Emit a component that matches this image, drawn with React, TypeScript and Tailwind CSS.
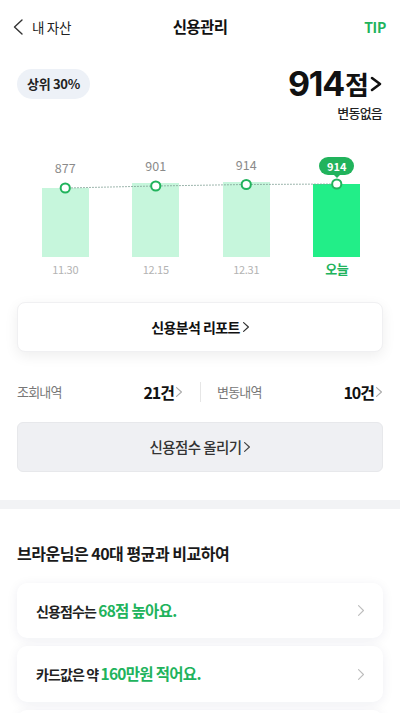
import React from "react";

const GREEN = "#21b35c";

function Chevron({ w = 6, h = 10, color = "#9a9a9a", sw = 1.3, className = "" }: { w?: number; h?: number; color?: string; sw?: number; className?: string }) {
  return (
    <svg width={w} height={h} viewBox={`0 0 ${w} ${h}`} className={className} fill="none">
      <polyline points={`${sw / 2},${sw / 2} ${w - sw / 2},${h / 2} ${sw / 2},${h - sw / 2}`} stroke={color} strokeWidth={sw} strokeLinecap="round" strokeLinejoin="round" />
    </svg>
  );
}

const cols = [
  { v: "877", d: "11.30", h: 69, gap: 12 },
  { v: "901", d: "12.15", h: 74, gap: 9 },
  { v: "914", d: "12.31", h: 75, gap: 9 },
  { v: "914", d: "오늘", h: 73, gap: 9, today: true },
];

const pts = [
  [65.25, 38],
  [155.75, 36],
  [246.25, 34.5],
  [336.75, 34],
];

export default function App() {
  return (
    <div
      className="w-[400px] h-[713px] overflow-hidden bg-white text-[#111]"
      style={{ fontFamily: '"Noto Sans CJK KR", "Noto Sans", sans-serif' }}
    >
      {/* Header */}
      <div className="h-[54px] grid grid-cols-3 items-center">
        <div className="flex items-center pl-[13px] gap-[9px]">
          <svg width="10" height="16" viewBox="0 0 10 16" fill="none">
            <polyline points="9,1 1.5,8 9,15" stroke="#333" strokeWidth="1.4" strokeLinejoin="round" strokeLinecap="round" />
          </svg>
          <span className="text-[13.5px] text-[#222] tracking-[-0.3px]">내 자산</span>
        </div>
        <div className="text-center text-[15.5px] font-bold tracking-[-0.6px]">신용관리</div>
        <div className="text-right pr-[14px] text-[14px] font-bold tracking-[-0.3px]" style={{ color: GREEN }}>
          TIP
        </div>
      </div>

      {/* Score */}
      <div className="mt-[12px] flex justify-between items-start px-[17px]">
        <div className="mt-[3px] h-[30px] px-[10px] rounded-full bg-[#edf1f7] flex items-center text-[13px] font-bold tracking-[-0.3px] text-[#222]">
          상위 30%
        </div>
        <div className="flex flex-col items-end pr-[1px]">
          <div className="h-[36px] flex items-center">
            <span className="text-[34px] font-bold leading-[36px] tracking-[-1.2px]" style={{ fontFamily: "Inter, sans-serif" }}>
              914
            </span>
            <span className="text-[26px] font-bold leading-[36px] ml-[1px] tracking-[-1px]">점</span>
            <svg width="12" height="16" viewBox="0 0 12 16" fill="none" className="ml-[2px]">
              <polyline points="2,2 10,8 2,14" stroke="#111" strokeWidth="2.6" strokeLinejoin="round" strokeLinecap="round" />
            </svg>
          </div>
          <div className="mt-[1px] leading-[20px] text-[13px] font-medium tracking-[-0.8px] text-[#222]">변동없음</div>
        </div>
      </div>

      {/* Chart */}
      <div className="relative mt-[27px]">
        <div className="grid grid-cols-4 pl-[20px] pr-[18px] h-[107px]">
          {cols.map((c, i) => (
            <div key={i} className="flex flex-col items-center justify-end">
              {c.today ? (
                <div className="relative h-[18px] w-[35px] rounded-full flex items-center justify-center" style={{ background: GREEN, marginBottom: c.gap }}>
                  <span className="text-[11px] font-bold text-white leading-none">{c.v}</span>
                  <div className="absolute left-1/2 -translate-x-1/2 top-[17px] w-0 h-0 border-l-[4px] border-r-[4px] border-t-[4px] border-l-transparent border-r-transparent" style={{ borderTopColor: GREEN }} />
                </div>
              ) : (
                <span className="text-[12.5px] leading-[16px] text-[#8a8a8a]" style={{ marginBottom: c.gap }}>
                  {c.v}
                </span>
              )}
              <div className={`w-[47px] ${c.today ? "bg-[#22ee88]" : "bg-[#c6f6dc]"}`} style={{ height: c.h }} />
            </div>
          ))}
        </div>
        <svg className="absolute left-0 top-0" width="400" height="107" viewBox="0 0 400 107" fill="none">
          <polyline
            points={pts.map((p) => p.join(",")).join(" ")}
            stroke="#7e9e93"
            strokeWidth="1"
            strokeDasharray="1.5 1.5"
          />
          {pts.map((p, i) => (
            <circle key={i} cx={p[0]} cy={p[1]} r="4.6" fill="white" stroke={GREEN} strokeWidth="2" />
          ))}
        </svg>
        <div className="grid grid-cols-4 pl-[20px] pr-[18px] h-[24px]">
          {cols.map((c, i) => (
            <div key={i} className="flex items-center justify-center">
              {c.today ? (
                <span className="text-[13px] font-bold tracking-[-0.5px]" style={{ color: GREEN }}>
                  {c.d}
                </span>
              ) : (
                <span className="text-[11px] text-[#b3b3b3] tracking-[-0.3px]">{c.d}</span>
              )}
            </div>
          ))}
        </div>
      </div>

      {/* Report button */}
      <div className="mx-[17px] mt-[21px] h-[50px] rounded-[8px] bg-white border border-[#f0f0f2] shadow-[0_4px_14px_rgba(0,0,0,0.07)] flex items-center justify-center gap-[3px]">
        <span className="text-[14px] font-bold tracking-[-0.6px]">신용분석 리포트</span>
        <Chevron w={6} h={10} color="#333" sw={1.2} />
      </div>

      {/* Stats */}
      <div className="mt-[20px] h-[40px] flex items-center px-[17px]">
        <div className="flex-1 flex items-center justify-between pr-[18px]">
          <span className="text-[13px] text-[#777] tracking-[-0.8px]">조회내역</span>
          <div className="flex items-center gap-[2px]">
            <span className="text-[16px] font-bold tracking-[-1px]">21건</span>
            <Chevron w={6} h={10} color="#aaa" sw={1.1} />
          </div>
        </div>
        <div className="w-px h-[20px] bg-[#e6e6e6]" />
        <div className="flex-1 flex items-center justify-between pl-[16px] pr-[1px]">
          <span className="text-[13px] text-[#777] tracking-[-0.8px]">변동내역</span>
          <div className="flex items-center gap-[2px]">
            <span className="text-[16px] font-bold tracking-[-1px]">10건</span>
            <Chevron w={6} h={10} color="#aaa" sw={1.1} />
          </div>
        </div>
      </div>

      {/* Raise score */}
      <div className="mx-[17px] mt-[10px] h-[50px] rounded-[6px] bg-[#eff0f3] border border-[#e7e8eb] flex items-center justify-center gap-[3px]">
        <span className="text-[14.5px] font-medium text-[#333] tracking-[-0.6px]">신용점수 올리기</span>
        <Chevron w={6} h={10} color="#444" sw={1.2} />
      </div>

      {/* Separator */}
      <div className="mt-[28px] h-[9px] bg-[#f2f3f5]" />

      {/* Compare */}
      <div className="mt-[32px] px-[17px] leading-[24px] text-[16px] font-bold tracking-[-0.5px] text-[#1a1a1a]">
        브라운님은 40대 평균과 비교하여
      </div>

      <div className="mx-[17px] mt-[18px] h-[55px] rounded-[10px] bg-white shadow-[0_2px_12px_rgba(20,30,80,0.07)] flex items-center justify-between pl-[19px] pr-[19px]">
        <div className="flex items-baseline">
          <span className="text-[14px] font-bold tracking-[-0.9px] text-[#222]">신용점수는&nbsp;</span>
          <span className="text-[15.5px] font-bold tracking-[-0.7px]" style={{ color: GREEN }}>
            68점 높아요.
          </span>
        </div>
        <Chevron w={6} h={11} color="#bdbdbd" sw={1.1} />
      </div>

      <div className="mx-[17px] mt-[8px] h-[56px] rounded-[10px] bg-white shadow-[0_2px_12px_rgba(20,30,80,0.07)] flex items-center justify-between pl-[19px] pr-[19px]">
        <div className="flex items-baseline">
          <span className="text-[14px] font-bold tracking-[-0.9px] text-[#222]">카드값은 약&nbsp;</span>
          <span className="text-[15.5px] font-bold tracking-[-0.7px]" style={{ color: GREEN }}>
            160만원 적어요.
          </span>
        </div>
        <Chevron w={6} h={11} color="#bdbdbd" sw={1.1} />
      </div>

      <div className="mx-[17px] mt-[8px] h-[56px] rounded-[10px] bg-white shadow-[0_2px_12px_rgba(20,30,80,0.07)]" />
    </div>
  );
}
